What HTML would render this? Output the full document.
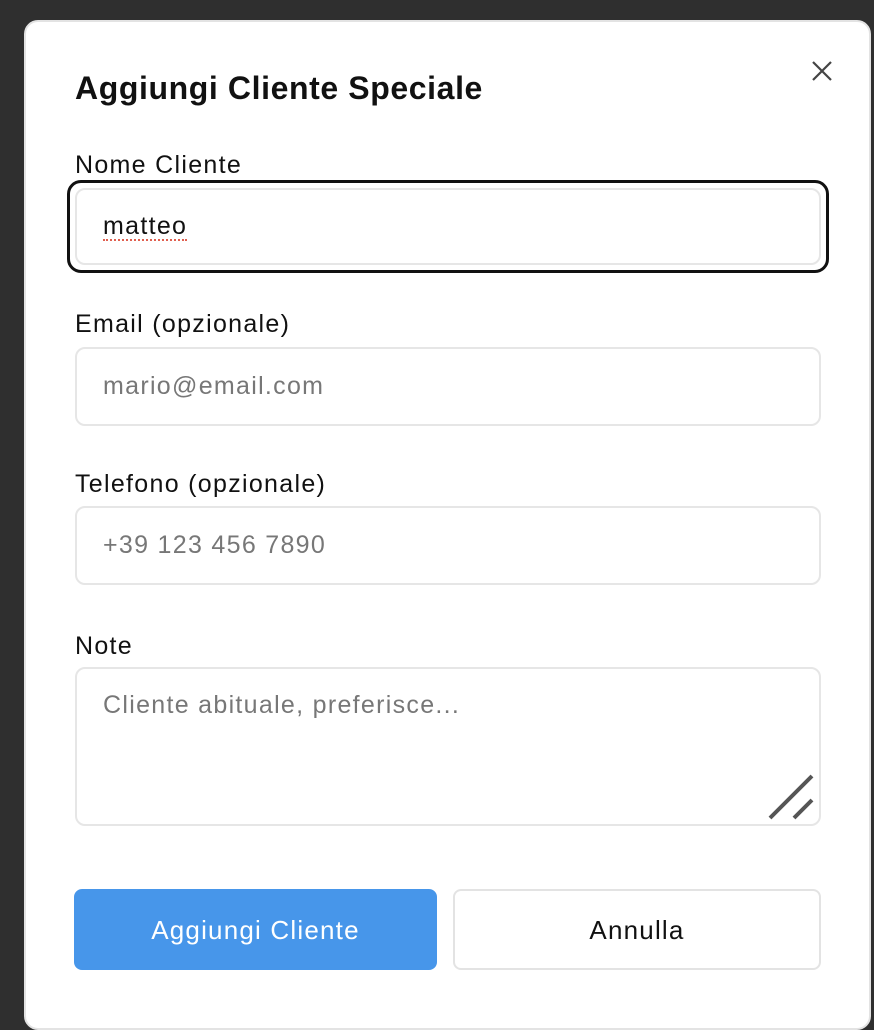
<!DOCTYPE html>
<html><head><style>
body{margin:0;width:874px;height:1006px;background:#2f2f2f;overflow:hidden;font-family:"Liberation Sans",sans-serif;position:relative}
.dlg{position:absolute;left:24px;top:20px;width:847px;height:1010px;background:#fff;border:2px solid #e3e3e3;border-radius:14px;box-sizing:border-box}
.t{position:absolute;left:75px;top:70px;font-size:32px;font-weight:bold;color:#111;letter-spacing:0.6px}
.x{position:absolute;left:810px;top:59px}
.l{position:absolute;left:75px;font-size:25px;color:#111;letter-spacing:1.3px}
.in{position:absolute;left:75px;width:746px;height:79px;border:2px solid #e6e6e6;border-radius:10px;box-sizing:border-box;font-size:25px;color:#777;padding-left:26px;line-height:75px;letter-spacing:1.3px}
.b{position:absolute;top:889px;height:81px;border-radius:8px;box-sizing:border-box;font-size:26px;text-align:center;line-height:83px;letter-spacing:1.2px}
</style></head><body>
<div class="dlg"></div>
<div class="t">Aggiungi Cliente Speciale</div>
<svg class="x" width="24" height="24" viewBox="0 0 24 24"><path d="M3 3L21 21M21 3L3 21" stroke="#444" stroke-width="2.2"/></svg>
<div class="l" style="top:151px">Nome Cliente</div>
<div style="position:absolute;left:67px;top:180px;width:762px;height:93px;border:3px solid #111;border-radius:14px;box-sizing:border-box"></div>
<div class="in" style="top:188px;height:77px;line-height:73px;color:#111"><span style="border-bottom:2px dotted #e06050;line-height:26px;display:inline-block">matteo</span></div>
<div class="l" style="top:310px">Email (opzionale)</div>
<div class="in" style="top:347px">mario@email.com</div>
<div class="l" style="top:470px">Telefono (opzionale)</div>
<div class="in" style="top:506px">+39 123 456 7890</div>
<div class="l" style="top:632px">Note</div>
<div class="in" style="top:667px;height:159px;line-height:normal;padding-top:22px">Cliente abituale, preferisce...</div>
<svg style="position:absolute;left:766px;top:772px" width="50" height="50" viewBox="0 0 50 50"><path d="M4 46L46 4M28 46L46 28" stroke="#555" stroke-width="4"/></svg>
<div class="b" style="left:74px;width:363px;background:#4796ea;color:#fff">Aggiungi Cliente</div>
<div class="b" style="left:453px;width:368px;border:2px solid #e3e3e3;color:#111;line-height:79px">Annulla</div>
</body></html>
